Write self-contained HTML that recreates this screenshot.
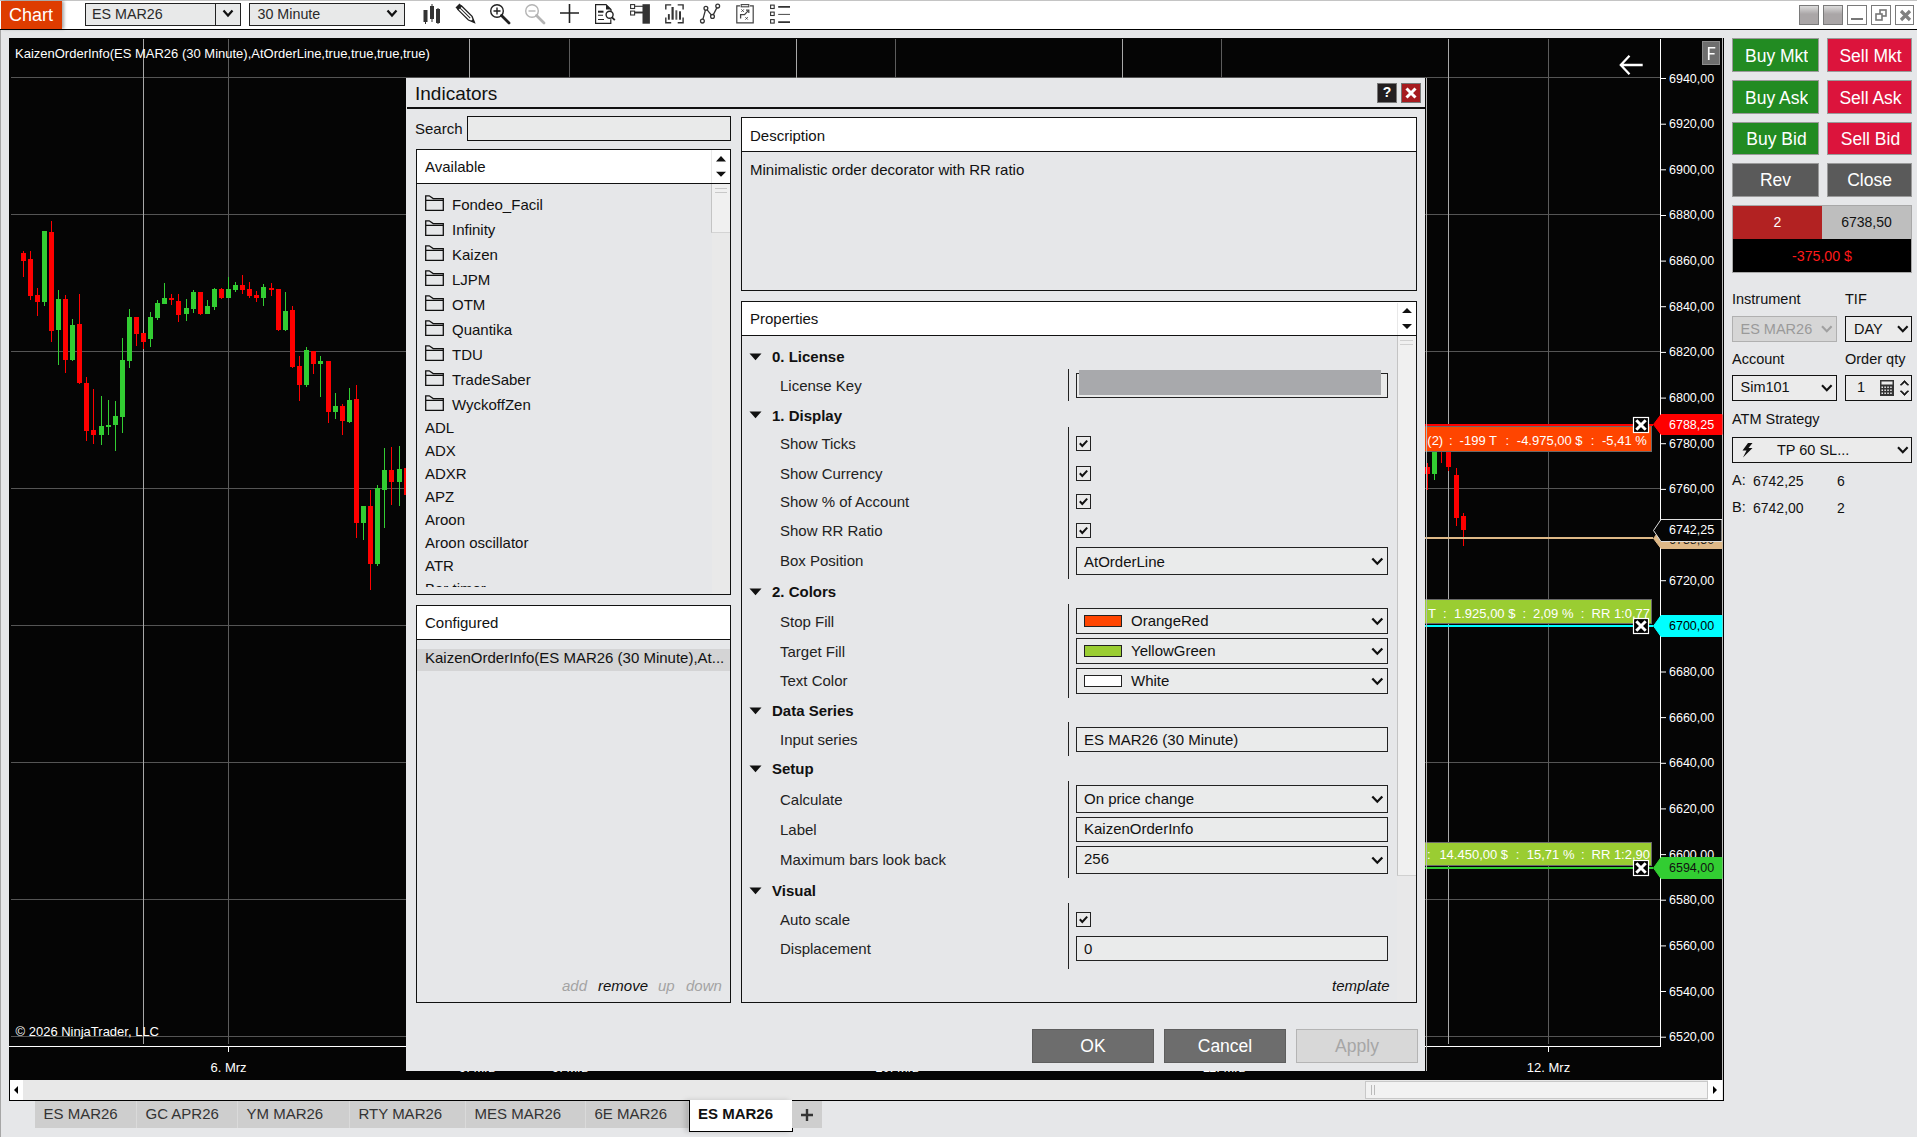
<!DOCTYPE html>
<html><head><meta charset="utf-8"><style>
*{box-sizing:border-box}
html,body{margin:0;padding:0}
body{width:1917px;height:1137px;position:relative;overflow:hidden;background:#e6e7e9;font-family:"Liberation Sans",sans-serif;color:#000}
.a{position:absolute}
.t{position:absolute;white-space:nowrap;line-height:1}
</style></head><body>
<div class="a" style="left:0;top:0;width:1917px;height:29px;background:#fff"></div>
<div class="a" style="left:0;top:0;width:1917px;height:1px;background:#c4c4c4"></div>
<div class="a" style="left:0;top:29px;width:1917px;height:1px;background:#000"></div>
<div class="a" style="left:1px;top:1px;width:61px;height:28px;background:#de3c00;box-shadow:2px 0 3px rgba(0,0,0,.35)"></div>
<div class="t" style="left:9px;top:6.26px;font-size:18px;color:#fff">Chart</div>
<div class="a" style="left:85px;top:3px;width:156px;height:23px;background:#e8e9e9;border:1px solid #222"></div>
<div class="a" style="left:215px;top:3px;width:1px;height:23px;background:#222"></div>
<div class="t" style="left:92px;top:7.10px;font-size:14.3px;color:#2a2a2a">ES MAR26</div>
<svg class="a" style="left:222px;top:9px" width="12" height="9"><path d="M1.5 1.5 L6 6.5 L10.5 1.5" stroke="#111" stroke-width="2.2" fill="none"/></svg>
<div class="a" style="left:249px;top:3px;width:156px;height:23px;background:#e8e9e9;border:1px solid #222"></div>
<div class="t" style="left:257.5px;top:7.10px;font-size:14.3px;color:#2a2a2a">30 Minute</div>
<svg class="a" style="left:386px;top:9px" width="12" height="9"><path d="M1.5 1.5 L6 6.5 L10.5 1.5" stroke="#111" stroke-width="2.2" fill="none"/></svg>

<svg class="a" style="left:415px;top:0" width="380" height="29">
 <g fill="#333" stroke="none">
  <rect x="8.5" y="10" width="4" height="12"/><rect x="10" y="21" width="1" height="3"/>
  <rect x="15" y="6" width="4" height="13"/><rect x="16.5" y="4" width="1" height="18"/>
  <rect x="21" y="9" width="4" height="14"/><rect x="22.5" y="8" width="1" height="16"/>
 </g>
 <g transform="translate(42.5,5.5) rotate(45) translate(-415,0)">
  <rect x="415" y="-2.8" width="3.2" height="5.6" fill="#222"/>
  <path d="M418.2 -2.6 H433 L439 0 L433 2.6 H418.2 Z" fill="none" stroke="#222" stroke-width="1.3"/>
  <path d="M418.2 0 H433" stroke="#222" stroke-width="1"/>
  <path d="M435.5 -1.4 L439.5 0 L435.5 1.4Z" fill="#222"/>
 </g>
 <g transform="translate(75,3)" stroke="#222" fill="none">
  <circle cx="7" cy="8" r="6.3" stroke-width="1.4"/>
  <path d="M3.5 8 H10.5 M7 4.5 V11.5" stroke-width="1.4"/>
  <path d="M11.5 12.5 L19 20" stroke-width="2.8" stroke-linecap="round"/>
 </g>
 <g transform="translate(110,3)" stroke="#b4b4b4" fill="none">
  <circle cx="7" cy="8" r="6.3" stroke-width="1.4"/>
  <path d="M3.5 8 H10.5" stroke-width="1.4"/>
  <path d="M11.5 12.5 L19 20" stroke-width="2.8" stroke-linecap="round"/>
 </g>
 <g stroke="#222" fill="none" stroke-width="1.6">
  <path d="M145 13 H164 M154.5 4 V23"/>
 </g>
 <g transform="translate(180,4)" stroke="#222" fill="none">
  <path d="M16 7.2 V5.6 L11 0.6 H0.6 V19.4 H15.8 V15.2" stroke-width="1.2"/>
  <path d="M11 0.6 L16 5.6 H11Z" fill="#222" stroke="none"/>
  <path d="M3 7.7 H8.5" stroke-width="2"/>
  <path d="M3 11.3 H8 M3 15.5 H9" stroke-width="1.1"/>
  <circle cx="14.6" cy="10.8" r="3.5" stroke-width="1.4" fill="#fff"/>
  <path d="M17 13.3 L19.8 16.1" stroke-width="1.9"/>
 </g>
 <g transform="translate(-415,0)">
  <rect x="630.6" y="4.6" width="4" height="3.9" fill="none" stroke="#333" stroke-width="1.1"/>
  <rect x="630.6" y="11.1" width="4" height="3.9" fill="none" stroke="#333" stroke-width="1.1"/>
  <path d="M634.6 6.3 H643" stroke="#333" stroke-width="1.1"/>
  <path d="M634.6 12.5 H643" stroke="#333" stroke-width="1.9"/>
  <rect x="642.5" y="4.2" width="7.4" height="19.5" fill="#333"/>
 </g>
 <g transform="translate(-415,0)" fill="none" stroke="#333">
  <path d="M665.8 9.4 V4.9 H671.2 M677.7 4.9 H683.1 V9.4 M683.1 17.4 V22.8 H677.7 M671.2 22.8 H665.8 V17.4" stroke-width="1.4"/>
  <rect x="667.9" y="14.1" width="1.9" height="5.6" fill="#333" stroke="none"/>
  <rect x="671.5" y="7" width="2.2" height="12.7" fill="#333" stroke="none"/>
  <rect x="675.4" y="10.3" width="1.9" height="9.4" fill="#555" stroke="none"/>
  <rect x="679" y="11.3" width="2" height="8.4" fill="#333" stroke="none"/>
 </g>
 <g transform="translate(-415,0)" fill="#fff" stroke="#333" stroke-width="1.3">
  <path d="M702.4 21.1 L705.9 8.3 L712.5 16.4 L717.7 6.1" fill="none"/>
  <circle cx="702.4" cy="21.1" r="1.9"/><circle cx="705.9" cy="8.3" r="1.9"/><circle cx="712.5" cy="16.4" r="1.9"/><circle cx="717.7" cy="6.1" r="1.9"/>
 </g>
 <g transform="translate(-415,0)" fill="none" stroke="#444">
  <path d="M740 5.8 H736.8 V22.9 H753.2 V5.8 H750" stroke-width="1.2"/>
  <rect x="741.2" y="4.6" width="7.6" height="2.2" stroke-width="1.1"/>
  <path d="M740.6 18.6 V14.6 H744.5 L748.6 10.4" stroke-width="1.3"/>
  <path d="M746 10.2 H748.8 V13" stroke-width="1.2"/>
  <path d="M741.4 9.4 L743.8 11.8 M743.8 9.4 L741.4 11.8 M745.4 17.2 L747.8 19.6 M747.8 17.2 L745.4 19.6" stroke-width="0.95"/>
 </g>
 <g transform="translate(-415,0)" fill="none" stroke="#333">
  <rect x="770.6" y="5.1" width="3.6" height="3.4" stroke-width="1.1"/>
  <rect x="770.6" y="12.1" width="3.6" height="3.4" stroke-width="1.1"/>
  <rect x="770.6" y="19.6" width="3.6" height="3.5" stroke-width="1.1"/>
  <path d="M778.2 6.8 H790 M778.2 22.1 H790" stroke-width="1.7"/>
  <path d="M778.2 14.4 H790" stroke-width="0.9"/>
 </g>
</svg>
<div class="a" style="left:1799px;top:5px;width:20px;height:20px;border:1px solid #7a7a7a;background:linear-gradient(#dcdcdc,#aaa6a7 45%,#aaa6a7)"></div>
<div class="a" style="left:1823px;top:5px;width:20px;height:20px;border:1px solid #7a7a7a;background:linear-gradient(#dcdcdc,#aaa6a7 45%,#aaa6a7)"></div>
<div class="a" style="left:1847px;top:5px;width:20px;height:20px;border:1px solid #7a7a7a;background:#fff"><div class="a" style="left:3px;top:12px;width:12px;height:2px;background:#777"></div></div>
<div class="a" style="left:1871px;top:5px;width:20px;height:20px;border:1px solid #7a7a7a;background:#fff"><svg class="a" style="left:3px;top:3px" width="13" height="13"><rect x="5" y="1" width="6" height="6" fill="none" stroke="#777" stroke-width="1.6"/><rect x="1" y="5" width="6" height="6" fill="#fff" stroke="#777" stroke-width="1.6"/></svg></div>
<div class="a" style="left:1895px;top:5px;width:19px;height:20px;border:1px solid #7a7a7a;background:#fff"><svg class="a" style="left:2.5px;top:3px" width="13" height="13"><path d="M2 2 L11 11 M11 2 L2 11" stroke="#808080" stroke-width="3.2"/></svg></div>
<div class="a" style="left:0;top:30px;width:1px;height:1107px;background:#a6a6a6"></div>
<div class="a" style="left:9px;top:38px;width:1714px;height:1042px;background:#050505"></div>
<div class="a" style="left:1722px;top:38px;width:1px;height:1042px;background:#bdbdbd"></div>
<div class="a" style="left:1723px;top:38px;width:1px;height:1042px;background:#000"></div>
<svg class="a" style="left:0;top:0" width="1917" height="1137"><rect x="11" y="77" width="1649" height="1" fill="#555"/><rect x="11" y="214" width="1649" height="1" fill="#555"/><rect x="11" y="351" width="1649" height="1" fill="#555"/><rect x="11" y="488" width="1649" height="1" fill="#555"/><rect x="11" y="625" width="1649" height="1" fill="#555"/><rect x="11" y="762" width="1649" height="1" fill="#555"/><rect x="11" y="899" width="1649" height="1" fill="#555"/><rect x="11" y="1036" width="1649" height="1" fill="#555"/><rect x="228" y="39" width="1" height="1005" fill="#5c5c5c"/><rect x="569" y="39" width="1" height="1005" fill="#5c5c5c"/><rect x="895" y="39" width="1" height="1005" fill="#5c5c5c"/><rect x="1221" y="39" width="1" height="1005" fill="#5c5c5c"/><rect x="1548" y="39" width="1" height="1005" fill="#5c5c5c"/><rect x="143" y="39" width="1" height="1005" fill="#a8a8a8"/><rect x="469" y="39" width="1" height="1005" fill="#a8a8a8"/><rect x="796" y="39" width="1" height="1005" fill="#a8a8a8"/><rect x="1122" y="39" width="1" height="1005" fill="#a8a8a8"/><rect x="1448" y="39" width="1" height="1005" fill="#a8a8a8"/><rect x="1660" y="39" width="1" height="1008" fill="#fff"/><rect x="9" y="1046" width="1652" height="1" fill="#fff"/><rect x="228" y="1046" width="1" height="6" fill="#fff"/><rect x="569" y="1046" width="1" height="6" fill="#fff"/><rect x="895" y="1046" width="1" height="6" fill="#fff"/><rect x="1221" y="1046" width="1" height="6" fill="#fff"/><rect x="1548" y="1046" width="1" height="6" fill="#fff"/><rect x="1660" y="78.0" width="6" height="1" fill="#fff"/><rect x="1660" y="123.7" width="6" height="1" fill="#fff"/><rect x="1660" y="169.3" width="6" height="1" fill="#fff"/><rect x="1660" y="215.0" width="6" height="1" fill="#fff"/><rect x="1660" y="260.6" width="6" height="1" fill="#fff"/><rect x="1660" y="306.2" width="6" height="1" fill="#fff"/><rect x="1660" y="351.9" width="6" height="1" fill="#fff"/><rect x="1660" y="397.6" width="6" height="1" fill="#fff"/><rect x="1660" y="443.2" width="6" height="1" fill="#fff"/><rect x="1660" y="488.9" width="6" height="1" fill="#fff"/><rect x="1660" y="580.2" width="6" height="1" fill="#fff"/><rect x="1660" y="671.5" width="6" height="1" fill="#fff"/><rect x="1660" y="717.1" width="6" height="1" fill="#fff"/><rect x="1660" y="762.8" width="6" height="1" fill="#fff"/><rect x="1660" y="808.4" width="6" height="1" fill="#fff"/><rect x="1660" y="854.1" width="6" height="1" fill="#fff"/><rect x="1660" y="899.7" width="6" height="1" fill="#fff"/><rect x="1660" y="945.4" width="6" height="1" fill="#fff"/><rect x="1660" y="991.0" width="6" height="1" fill="#fff"/><rect x="1660" y="1036.7" width="6" height="1" fill="#fff"/><rect x="23" y="251" width="1" height="26" fill="#ff0000"/><rect x="21" y="253" width="5" height="8" fill="#ff0000"/>
<rect x="30" y="251" width="1" height="49" fill="#ff0000"/><rect x="28" y="259" width="5" height="37" fill="#ff0000"/>
<rect x="37" y="288" width="1" height="28" fill="#ff0000"/><rect x="35" y="295" width="5" height="7" fill="#ff0000"/>
<rect x="44" y="231" width="1" height="75" fill="#32cd32"/><rect x="42" y="231" width="5" height="71" fill="#32cd32"/>
<rect x="51" y="221" width="1" height="121" fill="#ff0000"/><rect x="49" y="232" width="5" height="99" fill="#ff0000"/>
<rect x="58" y="290" width="1" height="75" fill="#32cd32"/><rect x="56" y="299" width="5" height="31" fill="#32cd32"/>
<rect x="65" y="295" width="1" height="78" fill="#ff0000"/><rect x="63" y="299" width="5" height="61" fill="#ff0000"/>
<rect x="72" y="319" width="1" height="42" fill="#32cd32"/><rect x="70" y="325" width="5" height="35" fill="#32cd32"/>
<rect x="79" y="294" width="1" height="90" fill="#ff0000"/><rect x="77" y="324" width="5" height="59" fill="#ff0000"/>
<rect x="86" y="377" width="1" height="64" fill="#ff0000"/><rect x="84" y="383" width="5" height="48" fill="#ff0000"/>
<rect x="93" y="389" width="1" height="55" fill="#ff0000"/><rect x="91" y="430" width="5" height="5" fill="#ff0000"/>
<rect x="101" y="396" width="1" height="49" fill="#32cd32"/><rect x="99" y="426" width="5" height="9" fill="#32cd32"/>
<rect x="108" y="400" width="1" height="35" fill="#32cd32"/><rect x="106" y="425" width="5" height="2" fill="#32cd32"/>
<rect x="115" y="401" width="1" height="50" fill="#32cd32"/><rect x="113" y="416" width="5" height="9" fill="#32cd32"/>
<rect x="122" y="338" width="1" height="95" fill="#32cd32"/><rect x="120" y="360" width="5" height="57" fill="#32cd32"/>
<rect x="129" y="309" width="1" height="59" fill="#32cd32"/><rect x="127" y="317" width="5" height="44" fill="#32cd32"/>
<rect x="136" y="317" width="1" height="29" fill="#ff0000"/><rect x="134" y="317" width="5" height="17" fill="#ff0000"/>
<rect x="143" y="333" width="1" height="16" fill="#ff0000"/><rect x="141" y="333" width="5" height="9" fill="#ff0000"/>
<rect x="150" y="312" width="1" height="35" fill="#32cd32"/><rect x="148" y="317" width="5" height="22" fill="#32cd32"/>
<rect x="157" y="300" width="1" height="20" fill="#32cd32"/><rect x="155" y="303" width="5" height="15" fill="#32cd32"/>
<rect x="164" y="283" width="1" height="21" fill="#32cd32"/><rect x="162" y="298" width="5" height="6" fill="#32cd32"/>
<rect x="171" y="294" width="1" height="11" fill="#ff0000"/><rect x="169" y="298" width="5" height="2" fill="#ff0000"/>
<rect x="178" y="294" width="1" height="28" fill="#ff0000"/><rect x="176" y="301" width="5" height="14" fill="#ff0000"/>
<rect x="186" y="299" width="1" height="22" fill="#32cd32"/><rect x="184" y="308" width="5" height="6" fill="#32cd32"/>
<rect x="193" y="290" width="1" height="23" fill="#32cd32"/><rect x="191" y="292" width="5" height="17" fill="#32cd32"/>
<rect x="200" y="292" width="1" height="23" fill="#ff0000"/><rect x="198" y="292" width="5" height="22" fill="#ff0000"/>
<rect x="207" y="300" width="1" height="14" fill="#32cd32"/><rect x="205" y="306" width="5" height="8" fill="#32cd32"/>
<rect x="214" y="288" width="1" height="22" fill="#32cd32"/><rect x="212" y="289" width="5" height="18" fill="#32cd32"/>
<rect x="221" y="288" width="1" height="11" fill="#ff0000"/><rect x="219" y="289" width="5" height="9" fill="#ff0000"/>
<rect x="228" y="277" width="1" height="21" fill="#32cd32"/><rect x="226" y="289" width="5" height="9" fill="#32cd32"/>
<rect x="235" y="282" width="1" height="10" fill="#32cd32"/><rect x="233" y="285" width="5" height="5" fill="#32cd32"/>
<rect x="242" y="275" width="1" height="19" fill="#ff0000"/><rect x="240" y="285" width="5" height="5" fill="#ff0000"/>
<rect x="249" y="282" width="1" height="16" fill="#ff0000"/><rect x="247" y="289" width="5" height="7" fill="#ff0000"/>
<rect x="256" y="291" width="1" height="11" fill="#ff0000"/><rect x="254" y="295" width="5" height="3" fill="#ff0000"/>
<rect x="263" y="284" width="1" height="22" fill="#32cd32"/><rect x="261" y="287" width="5" height="11" fill="#32cd32"/>
<rect x="271" y="283" width="1" height="13" fill="#ff0000"/><rect x="269" y="288" width="5" height="2" fill="#ff0000"/>
<rect x="278" y="289" width="1" height="42" fill="#ff0000"/><rect x="276" y="289" width="5" height="41" fill="#ff0000"/>
<rect x="285" y="292" width="1" height="39" fill="#32cd32"/><rect x="283" y="311" width="5" height="19" fill="#32cd32"/>
<rect x="292" y="306" width="1" height="62" fill="#ff0000"/><rect x="290" y="310" width="5" height="57" fill="#ff0000"/>
<rect x="299" y="356" width="1" height="45" fill="#ff0000"/><rect x="297" y="366" width="5" height="19" fill="#ff0000"/>
<rect x="306" y="347" width="1" height="40" fill="#32cd32"/><rect x="304" y="350" width="5" height="35" fill="#32cd32"/>
<rect x="313" y="351" width="1" height="23" fill="#ff0000"/><rect x="311" y="351" width="5" height="13" fill="#ff0000"/>
<rect x="320" y="356" width="1" height="41" fill="#32cd32"/><rect x="318" y="361" width="5" height="3" fill="#32cd32"/>
<rect x="328" y="361" width="1" height="62" fill="#ff0000"/><rect x="326" y="361" width="5" height="51" fill="#ff0000"/>
<rect x="335" y="393" width="1" height="26" fill="#32cd32"/><rect x="333" y="406" width="5" height="6" fill="#32cd32"/>
<rect x="342" y="404" width="1" height="31" fill="#ff0000"/><rect x="340" y="406" width="5" height="15" fill="#ff0000"/>
<rect x="349" y="388" width="1" height="35" fill="#32cd32"/><rect x="347" y="400" width="5" height="22" fill="#32cd32"/>
<rect x="356" y="385" width="1" height="153" fill="#ff0000"/><rect x="354" y="399" width="5" height="124" fill="#ff0000"/>
<rect x="363" y="506" width="1" height="34" fill="#32cd32"/><rect x="361" y="506" width="5" height="17" fill="#32cd32"/>
<rect x="370" y="490" width="1" height="100" fill="#ff0000"/><rect x="368" y="506" width="5" height="58" fill="#ff0000"/>
<rect x="377" y="485" width="1" height="81" fill="#32cd32"/><rect x="375" y="488" width="5" height="76" fill="#32cd32"/>
<rect x="384" y="448" width="1" height="80" fill="#32cd32"/><rect x="382" y="470" width="5" height="20" fill="#32cd32"/>
<rect x="391" y="447" width="1" height="58" fill="#ff0000"/><rect x="389" y="470" width="5" height="12" fill="#ff0000"/>
<rect x="399" y="446" width="1" height="60" fill="#32cd32"/><rect x="397" y="469" width="5" height="13" fill="#32cd32"/>
<rect x="406" y="460" width="1" height="40" fill="#ff0000"/><rect x="404" y="468" width="5" height="27" fill="#ff0000"/>
<rect x="1427" y="463" width="1" height="27" fill="#ff0000"/><rect x="1425" y="467" width="5" height="7" fill="#ff0000"/>
<rect x="1434" y="440" width="1" height="40" fill="#32cd32"/><rect x="1432" y="451" width="5" height="23" fill="#32cd32"/>
<rect x="1441" y="440" width="1" height="23" fill="#ff0000"/><rect x="1439" y="430" width="5" height="10" fill="#ff0000"/>
<rect x="1448" y="440" width="1" height="31" fill="#ff0000"/><rect x="1446" y="451" width="5" height="16" fill="#ff0000"/>
<rect x="1456" y="468" width="1" height="58" fill="#ff0000"/><rect x="1454" y="475" width="5" height="43" fill="#ff0000"/>
<rect x="1463" y="513" width="1" height="33" fill="#ff0000"/><rect x="1461" y="516" width="5" height="14" fill="#ff0000"/></svg>
<div class="t" style="left:1669px;top:72.52px;font-size:12.5px;color:#fff">6940,00</div>
<div class="t" style="left:1669px;top:118.17px;font-size:12.5px;color:#fff">6920,00</div>
<div class="t" style="left:1669px;top:163.82px;font-size:12.5px;color:#fff">6900,00</div>
<div class="t" style="left:1669px;top:209.47px;font-size:12.5px;color:#fff">6880,00</div>
<div class="t" style="left:1669px;top:255.12px;font-size:12.5px;color:#fff">6860,00</div>
<div class="t" style="left:1669px;top:300.77px;font-size:12.5px;color:#fff">6840,00</div>
<div class="t" style="left:1669px;top:346.42px;font-size:12.5px;color:#fff">6820,00</div>
<div class="t" style="left:1669px;top:392.07px;font-size:12.5px;color:#fff">6800,00</div>
<div class="t" style="left:1669px;top:437.72px;font-size:12.5px;color:#fff">6780,00</div>
<div class="t" style="left:1669px;top:483.37px;font-size:12.5px;color:#fff">6760,00</div>
<div class="t" style="left:1669px;top:574.67px;font-size:12.5px;color:#fff">6720,00</div>
<div class="t" style="left:1669px;top:665.97px;font-size:12.5px;color:#fff">6680,00</div>
<div class="t" style="left:1669px;top:711.62px;font-size:12.5px;color:#fff">6660,00</div>
<div class="t" style="left:1669px;top:757.27px;font-size:12.5px;color:#fff">6640,00</div>
<div class="t" style="left:1669px;top:802.92px;font-size:12.5px;color:#fff">6620,00</div>
<div class="t" style="left:1669px;top:848.57px;font-size:12.5px;color:#fff">6600,00</div>
<div class="t" style="left:1669px;top:894.22px;font-size:12.5px;color:#fff">6580,00</div>
<div class="t" style="left:1669px;top:939.87px;font-size:12.5px;color:#fff">6560,00</div>
<div class="t" style="left:1669px;top:985.52px;font-size:12.5px;color:#fff">6540,00</div>
<div class="t" style="left:1669px;top:1031.17px;font-size:12.5px;color:#fff">6520,00</div>
<div class="t" style="left:15px;top:47.00px;font-size:13px;color:#fff">KaizenOrderInfo(ES MAR26 (30 Minute),AtOrderLine,true,true,true,true)</div>
<div class="t" style="left:15.5px;top:1025.00px;font-size:13px;color:#fff">© 2026 NinjaTrader, LLC</div>
<div class="t" style="left:178.5px;top:1061.00px;width:100px;font-size:13px;color:#fff;text-align:center">6. Mrz</div>
<div class="t" style="left:1498.5px;top:1061.00px;width:100px;font-size:13px;color:#fff;text-align:center">12. Mrz</div>
<div class="t" style="left:427px;top:1061.00px;width:100px;font-size:13px;color:#fff;text-align:center">9. Mrz</div>
<div class="t" style="left:520px;top:1061.00px;width:100px;font-size:13px;color:#fff;text-align:center">9. Mrz</div>
<div class="t" style="left:847px;top:1061.00px;width:100px;font-size:13px;color:#fff;text-align:center">10. Mrz</div>
<div class="t" style="left:1174px;top:1061.00px;width:100px;font-size:13px;color:#fff;text-align:center">11. Mrz</div>
<div class="a" style="left:1702px;top:41px;width:18px;height:24px;background:#6e6e6e;border:1px solid #8c8c8c"></div>
<svg class="a" style="left:1700px;top:40px" width="22" height="26"><path d="M7.9 6.9 H15.3 V8.5 H9.6 V13.1 H14.6 V14.6 H9.6 V20.1 H7.9Z" fill="#fff"/></svg>
<svg class="a" style="left:1618px;top:53px" width="28" height="24"><path d="M24.7 12 H3.5 M11.5 2.8 L2.8 12 L11.5 21.2" stroke="#fff" stroke-width="2.3" fill="none"/></svg>
<svg class="a" style="left:0;top:0" width="1917" height="1137"><rect x="1000" y="424" width="653" height="2" fill="#ff0000"/><rect x="1000" y="426.5" width="651.5" height="25" fill="#ff4500" stroke="#6a6a6a" stroke-width="1"/><rect x="1000" y="537" width="653" height="2" fill="#deb887"/><rect x="1000" y="599.5" width="651.5" height="24" fill="#9acd32" stroke="#6a6a6a" stroke-width="1"/><rect x="1000" y="625" width="653" height="2" fill="#00ffff"/><rect x="1000" y="842.5" width="651.5" height="23" fill="#9acd32" stroke="#6a6a6a" stroke-width="1"/><rect x="1000" y="867" width="653" height="2" fill="#32cd32"/><path d="M1653.5 538.5 L1661 528.5 H1722 V548.5 H1661 Z" fill="#deb887" stroke="#deb887" stroke-width="1"/><text x="1669" y="544" font-family="Liberation Sans" font-size="12.5" fill="#222">6738,50</text><path d="M1653.5 530.5 L1661 519.5 H1722 V541.5 H1661 Z" fill="#050505" stroke="#e0e0e0" stroke-width="1"/><path d="M1653.5 424.5 L1661 414.5 H1722 V434.5 H1661 Z" fill="#ff0000" stroke="#ff0000" stroke-width="1"/><path d="M1653.5 626.0 L1661 615.5 H1722 V636.5 H1661 Z" fill="#00ffff" stroke="#00ffff" stroke-width="1"/><path d="M1653.5 868.0 L1661 857.5 H1722 V878.5 H1661 Z" fill="#32cd32" stroke="#32cd32" stroke-width="1"/><rect x="1633.5" y="417.5" width="15" height="15" fill="#000" stroke="#fff" stroke-width="1.2"/><path d="M1636.3 420.3 L1645.7 429.7 M1645.7 420.3 L1636.3 429.7" stroke="#fff" stroke-width="3"/><rect x="1633.5" y="618.5" width="15" height="15" fill="#000" stroke="#fff" stroke-width="1.2"/><path d="M1636.3 621.3 L1645.7 630.7 M1645.7 621.3 L1636.3 630.7" stroke="#fff" stroke-width="3"/><rect x="1633.5" y="860.5" width="15" height="15" fill="#000" stroke="#fff" stroke-width="1.2"/><path d="M1636.3 863.3 L1645.7 872.7 M1645.7 863.3 L1636.3 872.7" stroke="#fff" stroke-width="3"/></svg>
<div class="t" style="left:1669px;top:418.92px;font-size:12.5px;color:#fff">6788,25</div>
<div class="t" style="left:1669px;top:524.42px;font-size:12.5px;color:#fff">6742,25</div>
<div class="t" style="left:1669px;top:620.42px;font-size:12.5px;color:#000">6700,00</div>
<div class="t" style="left:1669px;top:862.42px;font-size:12.5px;color:#111">6594,00</div>
<div class="t" style="left:1427.3px;top:434.00px;font-size:13px;color:#fff">(2)</div><div class="t" style="left:1449px;top:434.00px;font-size:13px;color:#fff">:</div><div class="t" style="left:1459.6px;top:434.00px;font-size:13px;color:#fff">-199 T</div><div class="t" style="left:1505.6px;top:434.00px;font-size:13px;color:#fff">:</div><div class="t" style="left:1516.8px;top:434.00px;font-size:13px;color:#fff">-4.975,00 $</div><div class="t" style="left:1590.8px;top:434.00px;font-size:13px;color:#fff">:</div><div class="t" style="left:1602px;top:434.00px;font-size:13px;color:#fff">-5,41 %</div>
<div class="t" style="left:1428px;top:606.70px;font-size:13px;color:#fff">T</div><div class="t" style="left:1443px;top:606.70px;font-size:13px;color:#fff">:</div><div class="t" style="left:1454px;top:606.70px;font-size:13px;color:#fff">1.925,00 $</div><div class="t" style="left:1522.6px;top:606.70px;font-size:13px;color:#fff">:</div><div class="t" style="left:1533px;top:606.70px;font-size:13px;color:#fff">2,09 %</div><div class="t" style="left:1580.8px;top:606.70px;font-size:13px;color:#fff">:</div><div class="t" style="left:1591.5px;top:606.70px;font-size:13px;color:#fff">RR 1:0,77</div>
<div class="t" style="left:1427px;top:848.40px;font-size:13px;color:#fff">:</div><div class="t" style="left:1439.4px;top:848.40px;font-size:13px;color:#fff">14.450,00 $</div><div class="t" style="left:1515.8px;top:848.40px;font-size:13px;color:#fff">:</div><div class="t" style="left:1526.8px;top:848.40px;font-size:13px;color:#fff">15,71 %</div><div class="t" style="left:1581px;top:848.40px;font-size:13px;color:#fff">:</div><div class="t" style="left:1591.5px;top:848.40px;font-size:13px;color:#fff">RR 1:2,90</div>
<div class="a" style="left:9px;top:1080px;width:1715px;height:21px;background:#e8e8e8;border:1px solid #000;border-top:none"></div>
<div class="a" style="left:10px;top:1080px;width:13px;height:20px;background:#fff"></div>
<svg class="a" style="left:12px;top:1085px" width="8" height="10"><path d="M6 1 L2 5 L6 9Z" fill="#000"/></svg>
<div class="a" style="left:1365px;top:1081px;width:343px;height:18px;background:#f2f2f2;border:1px solid #c8c8c8"></div>
<div class="a" style="left:1371px;top:1085px;width:1px;height:10px;background:#bbb"></div><div class="a" style="left:1374px;top:1085px;width:1px;height:10px;background:#bbb"></div>
<div class="a" style="left:1708px;top:1080px;width:14px;height:20px;background:#fff"></div>
<svg class="a" style="left:1711px;top:1085px" width="8" height="10"><path d="M2 1 L6 5 L2 9Z" fill="#000"/></svg>
<div class="a" style="left:35px;top:1101px;width:102px;height:27px;background:#cecece;border-right:1px solid #dadada"></div>
<div class="t" style="left:43.5px;top:1106.30px;font-size:15px;color:#333">ES MAR26</div>
<div class="a" style="left:137px;top:1101px;width:101px;height:27px;background:#cecece;border-right:1px solid #dadada"></div>
<div class="t" style="left:145.5px;top:1106.30px;font-size:15px;color:#333">GC APR26</div>
<div class="a" style="left:238px;top:1101px;width:112px;height:27px;background:#cecece;border-right:1px solid #dadada"></div>
<div class="t" style="left:246.5px;top:1106.30px;font-size:15px;color:#333">YM MAR26</div>
<div class="a" style="left:350px;top:1101px;width:116px;height:27px;background:#cecece;border-right:1px solid #dadada"></div>
<div class="t" style="left:358.5px;top:1106.30px;font-size:15px;color:#333">RTY MAR26</div>
<div class="a" style="left:466px;top:1101px;width:120px;height:27px;background:#cecece;border-right:1px solid #dadada"></div>
<div class="t" style="left:474.5px;top:1106.30px;font-size:15px;color:#333">MES MAR26</div>
<div class="a" style="left:586px;top:1101px;width:103px;height:27px;background:#cecece;border-right:1px solid #dadada"></div>
<div class="t" style="left:594.5px;top:1106.30px;font-size:15px;color:#333">6E MAR26</div>
<div class="a" style="left:689px;top:1100px;width:104px;height:32px;background:#fff;border:1px solid #000;border-top:none;box-shadow:-4px 0 5px rgba(0,0,0,.15)"></div>
<div class="t" style="left:698px;top:1106.30px;font-size:15px;font-weight:bold;color:#111">ES MAR26</div>
<div class="a" style="left:792px;top:1101px;width:30px;height:27px;background:#cecece"></div>
<svg class="a" style="left:799px;top:1107px" width="16" height="16"><path d="M8 2 V14 M2 8 H14" stroke="#333" stroke-width="2.4"/></svg>
<div class="a" style="left:1732px;top:38px;width:87px;height:34px;background:#228b22;border:1px solid #9a9a9a"></div><div class="a" style="left:1745px;top:39px;width:63px;height:32px;overflow:hidden"><div class="t" style="left:0px;top:8.99px;width:63px;font-size:17.5px;color:#fff;text-align:center">Buy Mkt</div></div>
<div class="a" style="left:1827px;top:38px;width:85px;height:34px;background:#dc143c;border:1px solid #9a9a9a"></div><div class="a" style="left:1839px;top:39px;width:63px;height:32px;overflow:hidden"><div class="t" style="left:0px;top:8.99px;width:63px;font-size:17.5px;color:#fff;text-align:center">Sell Mkt</div></div>
<div class="a" style="left:1732px;top:80px;width:87px;height:34px;background:#228b22;border:1px solid #9a9a9a"></div><div class="a" style="left:1745px;top:81px;width:63px;height:32px;overflow:hidden"><div class="t" style="left:0px;top:9.19px;width:63px;font-size:17.5px;color:#fff;text-align:center">Buy Ask</div></div>
<div class="a" style="left:1827px;top:80px;width:85px;height:34px;background:#dc143c;border:1px solid #9a9a9a"></div><div class="a" style="left:1839px;top:81px;width:63px;height:32px;overflow:hidden"><div class="t" style="left:0px;top:9.19px;width:63px;font-size:17.5px;color:#fff;text-align:center">Sell Ask</div></div>
<div class="a" style="left:1732px;top:122px;width:87px;height:33px;background:#228b22;border:1px solid #9a9a9a"></div><div class="a" style="left:1745px;top:123px;width:63px;height:31px;overflow:hidden"><div class="t" style="left:0px;top:8.29px;width:63px;font-size:17.5px;color:#fff;text-align:center">Buy Bid</div></div>
<div class="a" style="left:1827px;top:122px;width:85px;height:33px;background:#dc143c;border:1px solid #9a9a9a"></div><div class="a" style="left:1839px;top:123px;width:63px;height:31px;overflow:hidden"><div class="t" style="left:0px;top:8.29px;width:63px;font-size:17.5px;color:#fff;text-align:center">Sell Bid</div></div>
<div class="a" style="left:1732px;top:163px;width:87px;height:34px;background:#5a5a5a;border:1px solid #9a9a9a"></div><div class="a" style="left:1733px;top:164px;width:85px;height:32px;overflow:hidden"><div class="t" style="left:0px;top:8.39px;width:85px;font-size:17.5px;color:#fff;text-align:center">Rev</div></div>
<div class="a" style="left:1827px;top:163px;width:85px;height:34px;background:#5a5a5a;border:1px solid #9a9a9a"></div><div class="a" style="left:1828px;top:164px;width:83px;height:32px;overflow:hidden"><div class="t" style="left:0px;top:8.39px;width:83px;font-size:17.5px;color:#fff;text-align:center">Close</div></div>
<div class="a" style="left:1732px;top:205px;width:180px;height:68px;border:1px solid #a8a8a8;background:#000"></div>
<div class="a" style="left:1733px;top:206px;width:89px;height:33px;background:#b22222"></div>
<div class="a" style="left:1822px;top:206px;width:89px;height:33px;background:#bebebe"></div>
<div class="t" style="left:1733px;top:214.85px;width:89px;font-size:14px;color:#fff;text-align:center">2</div>
<div class="t" style="left:1822px;top:214.85px;width:89px;font-size:14px;color:#111;text-align:center">6738,50</div>
<div class="t" style="left:1733px;top:249.48px;width:178px;font-size:14.2px;color:#ff1a1a;text-align:center">-375,00 $</div>
<div class="t" style="left:1732px;top:291.73px;font-size:14.5px;color:#111">Instrument</div>
<div class="t" style="left:1845px;top:291.73px;font-size:14.5px;color:#111">TIF</div>
<div class="a" style="left:1732px;top:316px;width:105px;height:26px;background:#d6d6d6;border:1px solid #b0b0b0"></div>
<div class="t" style="left:1740.5px;top:321.63px;font-size:14.5px;color:#9a9a9a">ES MAR26</div>
<svg class="a" style="left:1821px;top:325px" width="12" height="8"><path d="M1 1.3 L5.8 6.2 L10.6 1.3" stroke="#a0a0a0" stroke-width="2.1" fill="none"/></svg>
<div class="a" style="left:1845px;top:316px;width:67px;height:26px;background:#ebebeb;border:1px solid #111"></div>
<div class="t" style="left:1854px;top:321.63px;font-size:14.5px;color:#111">DAY</div>
<svg class="a" style="left:1897px;top:325px" width="12" height="8"><path d="M1 1.3 L5.8 6.2 L10.6 1.3" stroke="#111" stroke-width="2.1" fill="none"/></svg>
<div class="t" style="left:1732px;top:351.73px;font-size:14.5px;color:#111">Account</div>
<div class="t" style="left:1845px;top:351.73px;font-size:14.5px;color:#111">Order qty</div>
<div class="a" style="left:1732px;top:375px;width:105px;height:26px;background:#ebebeb;border:1px solid #111"></div>
<div class="t" style="left:1740.5px;top:380.33px;font-size:14.5px;color:#111">Sim101</div>
<svg class="a" style="left:1821px;top:384px" width="12" height="8"><path d="M1 1.3 L5.8 6.2 L10.6 1.3" stroke="#111" stroke-width="2.1" fill="none"/></svg>
<div class="a" style="left:1845px;top:375px;width:67px;height:26px;background:#ebebeb;border:1px solid #111"></div>
<div class="t" style="left:1857px;top:380.33px;font-size:14.5px;color:#111">1</div>
<svg class="a" style="left:1879px;top:379px" width="32" height="19"><rect x="1" y="1" width="14" height="16" fill="#333"/><rect x="2.5" y="2.5" width="11" height="3" fill="#ebebeb"/><rect x="2.5" y="7.5" width="1.5" height="1.5" fill="#ebebeb"/><rect x="2.5" y="10.5" width="1.5" height="1.5" fill="#ebebeb"/><rect x="2.5" y="13.5" width="1.5" height="1.5" fill="#ebebeb"/><rect x="5.4" y="7.5" width="1.5" height="1.5" fill="#ebebeb"/><rect x="5.4" y="10.5" width="1.5" height="1.5" fill="#ebebeb"/><rect x="5.4" y="13.5" width="1.5" height="1.5" fill="#ebebeb"/><rect x="8.3" y="7.5" width="1.5" height="1.5" fill="#ebebeb"/><rect x="8.3" y="10.5" width="1.5" height="1.5" fill="#ebebeb"/><rect x="8.3" y="13.5" width="1.5" height="1.5" fill="#ebebeb"/><rect x="11.2" y="7.5" width="1.5" height="1.5" fill="#ebebeb"/><rect x="11.2" y="10.5" width="1.5" height="1.5" fill="#ebebeb"/><rect x="11.2" y="13.5" width="1.5" height="1.5" fill="#ebebeb"/><path d="M21.3 6 L25.5 1.5 L29.7 6 L28.4 6 L25.5 3.3 L22.6 6Z M21.3 12 L25.5 16.5 L29.7 12 L28.4 12 L25.5 14.7 L22.6 12Z" fill="#111" stroke="#111" stroke-width="0.8"/></svg>
<div class="t" style="left:1732px;top:412.33px;font-size:14.5px;color:#111">ATM Strategy</div>
<div class="a" style="left:1732px;top:437px;width:180px;height:26px;background:#ebebeb;border:1px solid #111"></div>
<svg class="a" style="left:1740px;top:442px" width="15" height="17"><path d="M8 1 L2.5 8.5 H6.5 L3 15.5 L12.5 6 H8.5 L12.5 1Z" fill="#111"/></svg>
<div class="t" style="left:1777px;top:442.73px;font-size:14.5px;color:#111">TP 60 SL...</div>
<svg class="a" style="left:1897px;top:446px" width="12" height="8"><path d="M1 1.3 L5.8 6.2 L10.6 1.3" stroke="#111" stroke-width="2.1" fill="none"/></svg>
<div class="t" style="left:1732px;top:473.43px;font-size:14.5px;color:#111">A:</div>
<div class="t" style="left:1753px;top:473.85px;font-size:14px;color:#111">6742,25</div>
<div class="t" style="left:1837px;top:473.85px;font-size:14px;color:#111">6</div>
<div class="t" style="left:1732px;top:500.43px;font-size:14.5px;color:#111">B:</div>
<div class="t" style="left:1753px;top:500.85px;font-size:14px;color:#111">6742,00</div>
<div class="t" style="left:1837px;top:500.85px;font-size:14px;color:#111">2</div>
<div class="a" style="left:406px;top:78px;width:1019px;height:993px;background:#e6e7e9"></div>
<div class="a" style="left:1426px;top:78px;width:1px;height:993px;background:#b8b8b8"></div>
<div class="t" style="left:415px;top:83.92px;font-size:19px;color:#111">Indicators</div>
<div class="a" style="left:1377px;top:83px;width:20px;height:20px;background:#231f20;border:1px solid #777"></div>
<div class="t" style="left:1381px;top:85px;width:12px;text-align:center;font-size:14px;font-weight:bold;color:#fff">?</div>
<div class="a" style="left:1401px;top:83px;width:20px;height:20px;background:#a61b1f;border:1px solid #777"></div>
<svg class="a" style="left:1404px;top:86px" width="14" height="14"><path d="M2.5 2.5 L11.5 11.5 M11.5 2.5 L2.5 11.5" stroke="#fff" stroke-width="3"/></svg>
<div class="a" style="left:407px;top:107px;width:1018px;height:2px;background:#111"></div>
<div class="t" style="left:415px;top:121.00px;font-size:15px;color:#111">Search</div>
<div class="a" style="left:467px;top:116px;width:264px;height:25px;background:#e9eaea;border:1px solid #111"></div>
<div class="a" style="left:416px;top:149px;width:315px;height:446px;border:1px solid #111;background:#e6e7e9"></div><div class="a" style="left:417px;top:150px;width:313px;height:33px;background:#fff"></div><div class="a" style="left:416px;top:183px;width:315px;height:1px;background:#111"></div><div class="t" style="left:425px;top:159.30px;font-size:15px;color:#111">Available</div>
<div class="a" style="left:711px;top:150px;width:1px;height:33px;background:#e8e8e8"></div>
<svg class="a" style="left:713px;top:150px" width="16" height="32"><path d="M3 11.5 L8 6 L13 11.5Z M3 21.8 L8 26.8 L13 21.8Z" fill="#111"/></svg>
<div class="a" style="left:712px;top:184px;width:18px;height:410px;background:#e9e9e9"></div>
<div class="a" style="left:711px;top:184px;width:19px;height:49px;background:#f0f0f0;border-left:1px solid #c4c4c4;border-bottom:1px solid #d4d4d4"></div>
<div class="a" style="left:715px;top:188px;width:12px;height:1px;background:#c8c8c8"></div><div class="a" style="left:715px;top:192px;width:12px;height:1px;background:#c8c8c8"></div>
<svg class="a" style="left:425px;top:195px" width="20" height="17"><path d="M0.7 0.8 H4.2 L8.2 3.6 H18.3 V15.3 H0.7Z M0.7 5.3 H18.3" fill="none" stroke="#111" stroke-width="1.3"/></svg>
<div class="t" style="left:452px;top:197.30px;font-size:15px;color:#111">Fondeo_Facil</div>
<svg class="a" style="left:425px;top:220px" width="20" height="17"><path d="M0.7 0.8 H4.2 L8.2 3.6 H18.3 V15.3 H0.7Z M0.7 5.3 H18.3" fill="none" stroke="#111" stroke-width="1.3"/></svg>
<div class="t" style="left:452px;top:222.30px;font-size:15px;color:#111">Infinity</div>
<svg class="a" style="left:425px;top:245px" width="20" height="17"><path d="M0.7 0.8 H4.2 L8.2 3.6 H18.3 V15.3 H0.7Z M0.7 5.3 H18.3" fill="none" stroke="#111" stroke-width="1.3"/></svg>
<div class="t" style="left:452px;top:247.30px;font-size:15px;color:#111">Kaizen</div>
<svg class="a" style="left:425px;top:270px" width="20" height="17"><path d="M0.7 0.8 H4.2 L8.2 3.6 H18.3 V15.3 H0.7Z M0.7 5.3 H18.3" fill="none" stroke="#111" stroke-width="1.3"/></svg>
<div class="t" style="left:452px;top:272.30px;font-size:15px;color:#111">LJPM</div>
<svg class="a" style="left:425px;top:295px" width="20" height="17"><path d="M0.7 0.8 H4.2 L8.2 3.6 H18.3 V15.3 H0.7Z M0.7 5.3 H18.3" fill="none" stroke="#111" stroke-width="1.3"/></svg>
<div class="t" style="left:452px;top:297.30px;font-size:15px;color:#111">OTM</div>
<svg class="a" style="left:425px;top:320px" width="20" height="17"><path d="M0.7 0.8 H4.2 L8.2 3.6 H18.3 V15.3 H0.7Z M0.7 5.3 H18.3" fill="none" stroke="#111" stroke-width="1.3"/></svg>
<div class="t" style="left:452px;top:322.30px;font-size:15px;color:#111">Quantika</div>
<svg class="a" style="left:425px;top:345px" width="20" height="17"><path d="M0.7 0.8 H4.2 L8.2 3.6 H18.3 V15.3 H0.7Z M0.7 5.3 H18.3" fill="none" stroke="#111" stroke-width="1.3"/></svg>
<div class="t" style="left:452px;top:347.30px;font-size:15px;color:#111">TDU</div>
<svg class="a" style="left:425px;top:370px" width="20" height="17"><path d="M0.7 0.8 H4.2 L8.2 3.6 H18.3 V15.3 H0.7Z M0.7 5.3 H18.3" fill="none" stroke="#111" stroke-width="1.3"/></svg>
<div class="t" style="left:452px;top:372.30px;font-size:15px;color:#111">TradeSaber</div>
<svg class="a" style="left:425px;top:395px" width="20" height="17"><path d="M0.7 0.8 H4.2 L8.2 3.6 H18.3 V15.3 H0.7Z M0.7 5.3 H18.3" fill="none" stroke="#111" stroke-width="1.3"/></svg>
<div class="t" style="left:452px;top:397.30px;font-size:15px;color:#111">WyckoffZen</div>
<div class="a" style="left:417px;top:184px;width:294px;height:403px;overflow:hidden">
<div class="t" style="left:8px;top:236.30px;font-size:15px;color:#111">ADL</div>
<div class="t" style="left:8px;top:259.30px;font-size:15px;color:#111">ADX</div>
<div class="t" style="left:8px;top:282.30px;font-size:15px;color:#111">ADXR</div>
<div class="t" style="left:8px;top:305.30px;font-size:15px;color:#111">APZ</div>
<div class="t" style="left:8px;top:328.30px;font-size:15px;color:#111">Aroon</div>
<div class="t" style="left:8px;top:351.30px;font-size:15px;color:#111">Aroon oscillator</div>
<div class="t" style="left:8px;top:374.30px;font-size:15px;color:#111">ATR</div>
<div class="t" style="left:8px;top:397.30px;font-size:15px;color:#111">Bar timer</div>
</div>
<div class="a" style="left:416px;top:605px;width:315px;height:398px;border:1px solid #111;background:#e6e7e9"></div><div class="a" style="left:417px;top:606px;width:313px;height:33px;background:#fff"></div><div class="a" style="left:416px;top:639px;width:315px;height:1px;background:#111"></div><div class="t" style="left:425px;top:615.00px;font-size:15px;color:#111">Configured</div>
<div class="a" style="left:417px;top:649px;width:313px;height:22px;background:#d4d4d5"></div>
<div class="t" style="left:425px;top:650.20px;font-size:15px;color:#111">KaizenOrderInfo(ES MAR26 (30 Minute),At...</div>
<div class="t" style="left:562px;top:977.80px;font-size:15px;font-style:italic;color:#a3a3a3">add</div>
<div class="t" style="left:598px;top:977.80px;font-size:15px;font-style:italic;color:#111">remove</div>
<div class="t" style="left:658px;top:977.80px;font-size:15px;font-style:italic;color:#a3a3a3">up</div>
<div class="t" style="left:686px;top:977.80px;font-size:15px;font-style:italic;color:#a3a3a3">down</div>
<div class="a" style="left:741px;top:117px;width:676px;height:174px;border:1px solid #111;background:#e6e7e9"></div><div class="a" style="left:742px;top:118px;width:674px;height:33px;background:#fff"></div><div class="a" style="left:741px;top:151px;width:676px;height:1px;background:#111"></div><div class="t" style="left:750px;top:127.70px;font-size:15px;color:#111">Description</div>
<div class="t" style="left:750px;top:161.70px;font-size:15px;color:#111">Minimalistic order decorator with RR ratio</div>
<div class="a" style="left:741px;top:301px;width:676px;height:702px;border:1px solid #111;background:#e6e7e9"></div><div class="a" style="left:742px;top:302px;width:674px;height:33px;background:#fff"></div><div class="a" style="left:741px;top:335px;width:676px;height:1px;background:#111"></div><div class="t" style="left:750px;top:311.00px;font-size:15px;color:#111">Properties</div>
<div class="a" style="left:1397px;top:303px;width:1px;height:32px;background:#e8e8e8"></div>
<svg class="a" style="left:1400px;top:303px" width="16" height="30"><path d="M2 10 L7 5 L12 10Z M2 21 L7 26 L12 21Z" fill="#111"/></svg>
<div class="a" style="left:1397px;top:336px;width:19px;height:666px;background:#e8e8e9"></div><div class="a" style="left:1397px;top:336px;width:19px;height:540px;background:#f0f0f0;border-left:1px solid #c4c4c4;border-bottom:1px solid #d0d0d0"></div>
<div class="a" style="left:1400px;top:340px;width:13px;height:1px;background:#d0d0d0"></div><div class="a" style="left:1400px;top:344px;width:13px;height:1px;background:#d0d0d0"></div>
<svg class="a" style="left:749px;top:352.8px" width="13" height="8"><path d="M0.5 0.5 H12.5 L6.5 7.2Z" fill="#111"/></svg><div class="t" style="left:772px;top:348.90px;font-size:15px;font-weight:bold;color:#111">0. License</div>
<div class="t" style="left:780px;top:378.30px;font-size:15px;color:#222">License Key</div>
<div class="a" style="left:1068px;top:369px;width:1px;height:32px;background:#222"></div>
<div class="a" style="left:1076px;top:373px;width:312px;height:25px;border:1px solid #222;background:#e9eaea"></div>
<div class="a" style="left:1079px;top:370px;width:302px;height:25px;background:#a8a9ac"></div>
<svg class="a" style="left:749px;top:411.4px" width="13" height="8"><path d="M0.5 0.5 H12.5 L6.5 7.2Z" fill="#111"/></svg><div class="t" style="left:772px;top:407.50px;font-size:15px;font-weight:bold;color:#111">1. Display</div>
<div class="t" style="left:780px;top:436.00px;font-size:15px;color:#222">Show Ticks</div>
<div class="a" style="left:1076px;top:436px;width:15px;height:15px;border:1px solid #222;background:#eaeaea"></div><svg class="a" style="left:1076px;top:436px" width="15" height="15"><path d="M3.8 7.3 L6.3 10 L11.2 4.6" stroke="#111" stroke-width="2" fill="none"/></svg>
<div class="t" style="left:780px;top:465.70px;font-size:15px;color:#222">Show Currency</div>
<div class="a" style="left:1076px;top:466px;width:15px;height:15px;border:1px solid #222;background:#eaeaea"></div><svg class="a" style="left:1076px;top:466px" width="15" height="15"><path d="M3.8 7.3 L6.3 10 L11.2 4.6" stroke="#111" stroke-width="2" fill="none"/></svg>
<div class="t" style="left:780px;top:494.30px;font-size:15px;color:#222">Show % of Account</div>
<div class="a" style="left:1076px;top:494px;width:15px;height:15px;border:1px solid #222;background:#eaeaea"></div><svg class="a" style="left:1076px;top:494px" width="15" height="15"><path d="M3.8 7.3 L6.3 10 L11.2 4.6" stroke="#111" stroke-width="2" fill="none"/></svg>
<div class="t" style="left:780px;top:522.70px;font-size:15px;color:#222">Show RR Ratio</div>
<div class="a" style="left:1076px;top:523px;width:15px;height:15px;border:1px solid #222;background:#eaeaea"></div><svg class="a" style="left:1076px;top:523px" width="15" height="15"><path d="M3.8 7.3 L6.3 10 L11.2 4.6" stroke="#111" stroke-width="2" fill="none"/></svg>
<div class="t" style="left:780px;top:553.10px;font-size:15px;color:#222">Box Position</div>
<div class="a" style="left:1076px;top:547px;width:312px;height:28px;border:1px solid #222;background:#eaebeb"></div><div class="t" style="left:1084px;top:553.60px;font-size:15px;color:#111">AtOrderLine</div><svg class="a" style="left:1371px;top:556.5px" width="13" height="9"><path d="M1.3 1.5 L6.3 6.7 L11.3 1.5" stroke="#111" stroke-width="2.3" fill="none"/></svg>
<div class="a" style="left:1068px;top:427px;width:1px;height:152px;background:#222"></div>
<svg class="a" style="left:749px;top:587.6px" width="13" height="8"><path d="M0.5 0.5 H12.5 L6.5 7.2Z" fill="#111"/></svg><div class="t" style="left:772px;top:583.70px;font-size:15px;font-weight:bold;color:#111">2. Colors</div>
<div class="t" style="left:780px;top:613.50px;font-size:15px;color:#222">Stop Fill</div>
<div class="a" style="left:1076px;top:608px;width:312px;height:26px;border:1px solid #222;background:#eaebeb"></div><div class="a" style="left:1084px;top:615px;width:38px;height:12px;background:#ff4500;border:1px solid #222"></div><div class="t" style="left:1131px;top:613.00px;font-size:15px;color:#111">OrangeRed</div><svg class="a" style="left:1371px;top:616.5px" width="13" height="9"><path d="M1.3 1.5 L6.3 6.7 L11.3 1.5" stroke="#111" stroke-width="2.3" fill="none"/></svg>
<div class="t" style="left:780px;top:643.80px;font-size:15px;color:#222">Target Fill</div>
<div class="a" style="left:1076px;top:638px;width:312px;height:26px;border:1px solid #222;background:#eaebeb"></div><div class="a" style="left:1084px;top:645px;width:38px;height:12px;background:#9acd32;border:1px solid #222"></div><div class="t" style="left:1131px;top:643.10px;font-size:15px;color:#111">YellowGreen</div><svg class="a" style="left:1371px;top:646.5px" width="13" height="9"><path d="M1.3 1.5 L6.3 6.7 L11.3 1.5" stroke="#111" stroke-width="2.3" fill="none"/></svg>
<div class="t" style="left:780px;top:672.90px;font-size:15px;color:#222">Text Color</div>
<div class="a" style="left:1076px;top:668px;width:312px;height:26px;border:1px solid #222;background:#eaebeb"></div><div class="a" style="left:1084px;top:675px;width:38px;height:12px;background:#ffffff;border:1px solid #222"></div><div class="t" style="left:1131px;top:672.90px;font-size:15px;color:#111">White</div><svg class="a" style="left:1371px;top:676.5px" width="13" height="9"><path d="M1.3 1.5 L6.3 6.7 L11.3 1.5" stroke="#111" stroke-width="2.3" fill="none"/></svg>
<div class="a" style="left:1068px;top:604px;width:1px;height:94px;background:#222"></div>
<svg class="a" style="left:749px;top:707.1px" width="13" height="8"><path d="M0.5 0.5 H12.5 L6.5 7.2Z" fill="#111"/></svg><div class="t" style="left:772px;top:703.20px;font-size:15px;font-weight:bold;color:#111">Data Series</div>
<div class="t" style="left:780px;top:732.30px;font-size:15px;color:#222">Input series</div>
<div class="a" style="left:1076px;top:727px;width:312px;height:25px;border:1px solid #222;background:#eaebeb"></div><div class="t" style="left:1084px;top:731.60px;font-size:15px;color:#111">ES MAR26 (30 Minute)</div>
<div class="a" style="left:1068px;top:722px;width:1px;height:34px;background:#222"></div>
<svg class="a" style="left:749px;top:765.2px" width="13" height="8"><path d="M0.5 0.5 H12.5 L6.5 7.2Z" fill="#111"/></svg><div class="t" style="left:772px;top:761.30px;font-size:15px;font-weight:bold;color:#111">Setup</div>
<div class="t" style="left:780px;top:791.60px;font-size:15px;color:#222">Calculate</div>
<div class="a" style="left:1076px;top:785px;width:312px;height:28px;border:1px solid #222;background:#eaebeb"></div><div class="t" style="left:1084px;top:791.00px;font-size:15px;color:#111">On price change</div><svg class="a" style="left:1371px;top:794.5px" width="13" height="9"><path d="M1.3 1.5 L6.3 6.7 L11.3 1.5" stroke="#111" stroke-width="2.3" fill="none"/></svg>
<div class="t" style="left:780px;top:822.00px;font-size:15px;color:#222">Label</div>
<div class="a" style="left:1076px;top:817px;width:312px;height:25px;border:1px solid #222;background:#eaebeb"></div><div class="t" style="left:1084px;top:820.80px;font-size:15px;color:#111">KaizenOrderInfo</div>
<div class="t" style="left:780px;top:852.30px;font-size:15px;color:#222">Maximum bars look back</div>
<div class="a" style="left:1076px;top:846px;width:312px;height:28px;border:1px solid #222;background:#eaebeb"></div><div class="t" style="left:1084px;top:851.40px;font-size:15px;color:#111">256</div><svg class="a" style="left:1371px;top:855.5px" width="13" height="9"><path d="M1.3 1.5 L6.3 6.7 L11.3 1.5" stroke="#111" stroke-width="2.3" fill="none"/></svg>
<div class="a" style="left:1068px;top:781px;width:1px;height:97px;background:#222"></div>
<svg class="a" style="left:749px;top:886.8px" width="13" height="8"><path d="M0.5 0.5 H12.5 L6.5 7.2Z" fill="#111"/></svg><div class="t" style="left:772px;top:882.90px;font-size:15px;font-weight:bold;color:#111">Visual</div>
<div class="t" style="left:780px;top:912.10px;font-size:15px;color:#222">Auto scale</div>
<div class="a" style="left:1076px;top:912px;width:15px;height:15px;border:1px solid #222;background:#eaeaea"></div><svg class="a" style="left:1076px;top:912px" width="15" height="15"><path d="M3.8 7.3 L6.3 10 L11.2 4.6" stroke="#111" stroke-width="2" fill="none"/></svg>
<div class="t" style="left:780px;top:941.30px;font-size:15px;color:#222">Displacement</div>
<div class="a" style="left:1076px;top:936px;width:312px;height:25px;border:1px solid #222;background:#eaebeb"></div><div class="t" style="left:1084px;top:940.50px;font-size:15px;color:#111">0</div>
<div class="a" style="left:1068px;top:903px;width:1px;height:66px;background:#222"></div>
<div class="t" style="left:1332px;top:977.80px;font-size:15px;font-style:italic;color:#111">template</div>
<div class="a" style="left:1032px;top:1029px;width:122px;height:34px;background:#6d6d6d;border:1px solid #5e5e5e"></div><div class="t" style="left:1032px;top:1037.69px;width:122px;font-size:17.5px;text-align:center;color:#fff">OK</div>
<div class="a" style="left:1164px;top:1029px;width:122px;height:34px;background:#6d6d6d;border:1px solid #5e5e5e"></div><div class="t" style="left:1164px;top:1037.69px;width:122px;font-size:17.5px;text-align:center;color:#fff">Cancel</div>
<div class="a" style="left:1296px;top:1029px;width:122px;height:34px;background:#d8d8d8;border:1px solid #b4b4b4"></div><div class="t" style="left:1296px;top:1037.69px;width:122px;font-size:17.5px;text-align:center;color:#a6a6a6">Apply</div>
</body></html>
